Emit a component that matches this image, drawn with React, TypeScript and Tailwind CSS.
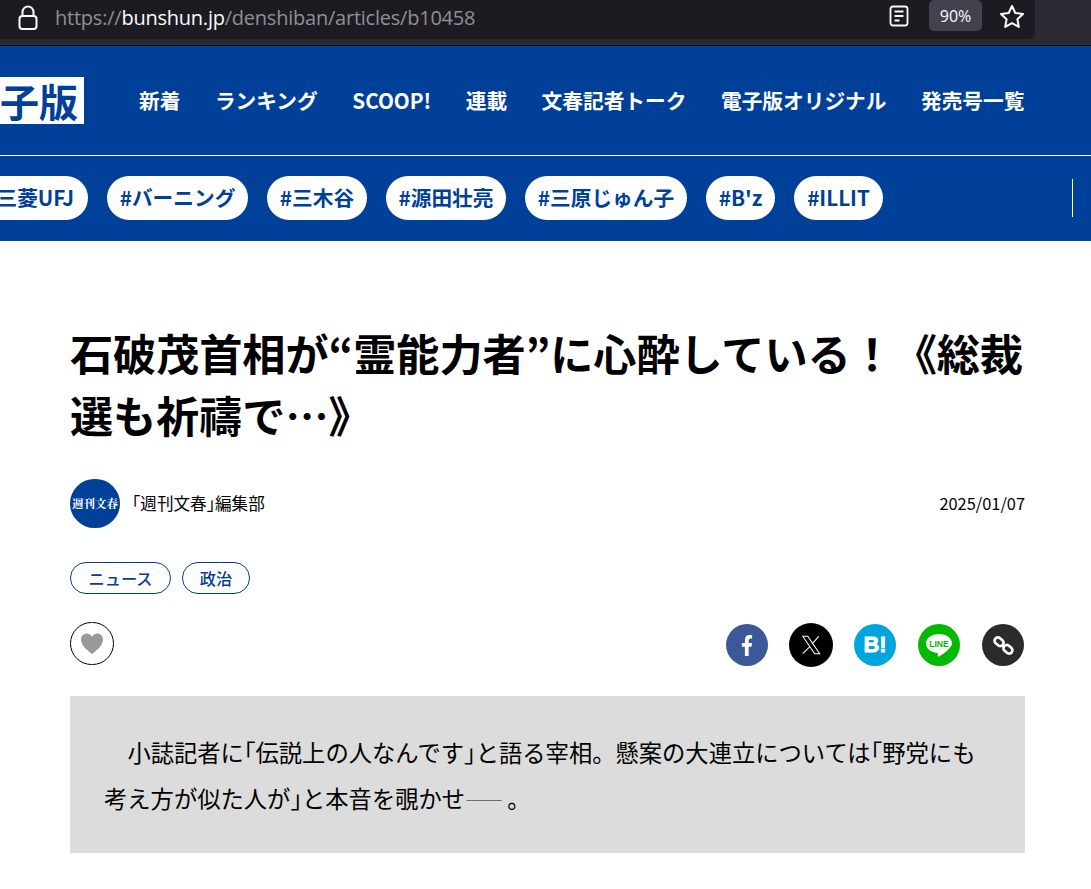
const jp = "font-['Noto_Sans_CJK_JP','Noto_Sans',sans-serif]";

const navItems = ["新着", "ランキング", "SCOOP!", "連載", "文春記者トーク", "電子版オリジナル", "発売号一覧"];
const tags = [
  { t: "#バーニング", w: "w-[141px]" },
  { t: "#三木谷", w: "w-[100px]" },
  { t: "#源田壮亮", w: "w-[120px]" },
  { t: "#三原じゅん子", w: "w-[162px]" },
  { t: "#B'z", w: "w-[69px]" },
  { t: "#ILLIT", w: "w-[89px]" },
];

function Circle({ className, children }: { className: string; children: React.ReactNode }) {
  return <div className={`flex items-center justify-center rounded-full ${className}`}>{children}</div>;
}

function H({ children }: { children: React.ReactNode }) {
  return <span className="[font-feature-settings:'halt']">{children}</span>;
}

export default function App() {
  return (
    <div className={`w-[1091px] h-[889px] overflow-hidden bg-white ${jp}`}>
      {/* browser bar */}
      <div className="h-[46px] bg-[#2b2a33] border-b border-[#0c0c0d]">
        <div className="w-[1035px] h-[39px] bg-[#1c1b22] rounded-br-[6px] flex items-center pl-[18px]">
          <svg width="20" height="26" viewBox="0 0 20 26" fill="none" stroke="#fbfbfe" strokeWidth="2" className="-mt-[4px]">
            <path d="M4.5 11V7a5.5 5.5 0 0 1 11 0v4" />
            <rect x="1.5" y="11" width="17" height="13" rx="3" />
          </svg>
          <div className="ml-[17px] text-[20px] leading-[28px] font-['Open_Sans',sans-serif] text-[#8f8f94] -mt-[4px] w-[801px] whitespace-nowrap tracking-[-0.23px]">
            https://<span className="text-[#fbfbfe]">bunshun.jp</span>/denshiban/articles/b10458
          </div>
          <svg width="20" height="22" viewBox="0 0 20 22" fill="none" stroke="#fbfbfe" strokeWidth="1.8" className="ml-[33px] -mt-[8px]">
            <rect x="1.5" y="1.5" width="17" height="19" rx="2.5" />
            <path d="M5.5 6.500h9M5.500 11h9M5.500 15.500h5" />
          </svg>
          <div className="ml-[20px] w-[53px] h-[31px] -mt-[8px] rounded-[5px] bg-[#42414d] text-[#fbfbfe] text-[16px] flex items-center justify-center font-['Open_Sans',sans-serif]">
            90%
          </div>
          <svg width="26" height="25" viewBox="0 0 26 25" fill="none" stroke="#fbfbfe" strokeWidth="2" strokeLinejoin="round" className="ml-[17px] -mt-[7px]">
            <path d="M13 2l3.300 7 7.700 1-5.600 5.300 1.400 7.600L13 19.200l-6.800 3.700 1.400-7.600L2 10l7.700-1z" />
          </svg>
        </div>
      </div>

      {/* site header */}
      <header className="bg-[#004098]">
        <div className="h-[109px] flex items-center">
          <div className="w-[84px] h-[47px] bg-white overflow-hidden flex justify-end items-center pr-[6px] shrink-0">
            <span className="text-[#004098] text-[39px] leading-none font-bold whitespace-nowrap">子版</span>
          </div>
          <nav className="flex gap-[34.5px] ml-[55px] text-white text-[20.7px] font-bold whitespace-nowrap">
            {navItems.map((n) => (
              <span key={n}>{n}</span>
            ))}
          </nav>
        </div>
        <div className="h-px bg-white" />
        <div className="h-[85px] flex items-center relative">
          <div className="flex items-center gap-[19px] -mt-[2px]">
            <div className="w-[88px] h-[44px] bg-white rounded-r-full flex items-center justify-end pr-[14px] text-[#004098] text-[20.7px] font-bold overflow-hidden whitespace-nowrap">
              三菱UFJ
            </div>
            {tags.map((x) => (
              <div key={x.t} className={`${x.w} h-[44px] bg-white rounded-full flex items-center justify-center text-[#004098] text-[20.7px] font-bold whitespace-nowrap`}>
                {x.t}
              </div>
            ))}
          </div>
          <div className="absolute left-[1072px] top-[23px] w-px h-[38px] bg-white" />
        </div>
      </header>

      {/* article */}
      <main className="px-[70px] w-[1025px] box-content">
        <h1 className="mt-[80px] w-[960px] text-[43.2px] leading-[62px] font-bold text-black whitespace-nowrap tracking-[-0.1px]">
          石破茂首相が“霊能力者”に心酔している！《総裁
          <br />
          選も祈禱で…》
        </h1>
        <div className="mt-[34px] flex items-center justify-between w-[955px]">
          <div className="flex items-center">
            <Circle className="w-[50px] h-[49px] bg-[#004098]">
              <span className="text-white text-[11.5px] font-bold font-['Noto_Serif_CJK_JP','Liberation_Serif',serif] whitespace-nowrap">週刊文春</span>
            </Circle>
            <span className="ml-[12px] text-[16.6px] text-black font-normal">
              <H>「</H>週刊文春<H>」</H>編集部
            </span>
          </div>
          <span className="text-[16.4px] text-black font-normal">2025/01/07</span>
        </div>
        <div className="mt-[34px] flex gap-[11px]">
          <div className="w-[101px] h-[32px] rounded-full border border-[#004098] flex items-center justify-center text-[#004098] text-[16.2px] font-medium">ニュース</div>
          <div className="w-[68px] h-[32px] rounded-full border border-[#004098] flex items-center justify-center text-[#004098] text-[16.2px] font-medium">政治</div>
        </div>
        <div className="mt-[28px] flex items-start justify-between w-[955px]">
          <Circle className="w-[44px] h-[43px] border-[1.5px] border-black">
            <svg width="24" height="21" viewBox="0 0 24 21" fill="#999">
              <path d="M12 21C8 17.500 1 13 1 6.500 1 3 3.500.5 6.700.5 9 .5 11 1.800 12 3.800 13 1.800 15 .5 17.300.5 20.500.5 23 3 23 6.500 23 13 16 17.500 12 21z" />
            </svg>
          </Circle>
          <div className="flex items-center gap-[21px] mt-[1px] mr-[1px]">
            <Circle className="w-[42px] h-[42px] bg-[#3b5998]">
              <svg width="12" height="21" viewBox="0 0 320 512" fill="white" preserveAspectRatio="none">
                <path d="M279 288l14-93h-89v-60c0-25 12-50 52-50h41V6s-37-6-72-6c-73 0-121 44-121 125v70H23v93h81v224h100V288z" />
              </svg>
            </Circle>
            <Circle className="w-[44px] h-[44px] bg-black">
              <svg width="22" height="22" viewBox="0 0 24 24" fill="none" stroke="white" strokeWidth="1.1">
                <path d="M3 2.500h5.500l13 19H16z" />
                <path d="M20.500 2.500 13 11M10.800 13.800 3 21.500" />
              </svg>
            </Circle>
            <Circle className="w-[42px] h-[42px] bg-[#00a4de]">
              <span className="text-white text-[22px] font-bold leading-none font-['Liberation_Sans',sans-serif] [-webkit-text-stroke:0.8px_white] -mt-[1px]">B!</span>
            </Circle>
            <Circle className="w-[42px] h-[42px] ml-[1px] bg-[#00b900]">
              <svg width="30" height="30" viewBox="0 0 30 30">
                <path fill="white" d="M15 4C7.800 4 2 8 2 13.500c0 5 4.600 8.600 10.800 9.400.4.100 1 .3 1.100.7.100.3 0 .8 0 1.100l-.2 1c-.1.3-.2 1.200 1.100.7 1.300-.5 7-4.100 9.600-7 1.700-1.900 3.600-3.400 3.600-5.900C28 8 22.200 4 15 4z" />
                <text x="15" y="17" textAnchor="middle" fontSize="8.500" fontWeight="700" fill="#00b900" fontFamily="Liberation Sans">LINE</text>
              </svg>
            </Circle>
            <Circle className="w-[42px] h-[42px] ml-[1px] bg-[#2b2b2b]">
              <svg width="23" height="23" viewBox="0 0 26 26" fill="none" stroke="white" strokeWidth="3">
                <rect x="2.500" y="5" width="11" height="7.500" rx="3.750" transform="rotate(40 8 8.750)" />
                <rect x="12.500" y="13.500" width="11" height="7.500" rx="3.750" transform="rotate(40 18 17.250)" />
              </svg>
            </Circle>
          </div>
        </div>
        <div className="mt-[29px] w-[955px] h-[157px] bg-[#dcdcdc] pl-[34px] pt-[33px] text-[23.3px] leading-[46px] text-black font-normal whitespace-nowrap">
          <p className="indent-[23.4px]">
            小誌記者に<H>「</H>伝説上の人なんです<H>」</H>と語る宰相。懸案の大連立については<H>「</H>野党にも
            <br />
            考え方が似た人が<H>」</H>と本音を覗かせ<span className="text-[19px] tracking-[4px] text-[#555] font-light">――</span>。
          </p>
        </div>
      </main>
    </div>
  );
}
